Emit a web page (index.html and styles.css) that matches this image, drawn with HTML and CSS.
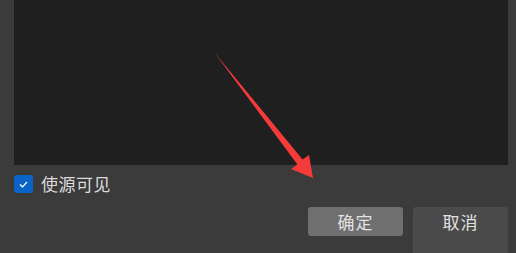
FILE: index.html
```html
<!DOCTYPE html>
<html>
<head>
<meta charset="utf-8">
<link rel="stylesheet" href="styles.css">
</head>
<body>
<div class="dialog">
  <div class="preview"></div>
  <label class="check-row">
    <span class="checkbox">
      <svg width="19" height="18" viewBox="0 0 19 18"><path d="M6 9.5 L8.5 11.8 L13 7" fill="none" stroke="#fff" stroke-width="1.2"/></svg>
    </span>
    <span class="check-label">使源可见</span>
  </label>
  <div class="actions">
    <button class="btn btn-ok">确定</button>
    <button class="btn btn-cancel">取消</button>
  </div>
  <svg class="arrow" width="516" height="253" viewBox="0 0 516 253">
    <polygon points="214,52 302.6,159.6 309,155 313,178 291,169 297.4,164.4" fill="#f53a3a"/>
  </svg>
</div>
</body>
</html>
```
FILE: styles.css
```css
html, body {
  margin: 0;
  padding: 0;
  width: 516px;
  height: 253px;
  overflow: hidden;
  background: #3b3b3b;
  font-family: "Noto Sans CJK SC", "Noto Sans", sans-serif;
}
.dialog {
  position: relative;
  width: 516px;
  height: 253px;
  padding: 0 8px 0 14px;
  box-sizing: border-box;
  display: flex;
  flex-direction: column;
}
.preview {
  height: 165px;
  background: #1f1f1f;
  flex: none;
}
.check-row {
  margin-top: 10px;
  display: flex;
  align-items: center;
  gap: 8px;
  height: 18px;
}
.checkbox {
  width: 19px;
  height: 18px;
  background: #0b63c5;
  border-radius: 3px;
  display: flex;
}
.check-label {
  color: #dcdcdc;
  font-size: 17px;
  line-height: 18px;
  letter-spacing: 0.5px;
}
.actions {
  margin-top: 14px;
  display: flex;
  justify-content: flex-end;
  gap: 10px;
  align-items: flex-start;
}
.btn {
  width: 95px;
  border: none;
  border-radius: 3px;
  font-family: "Noto Sans CJK SC", "Noto Sans", sans-serif;
  font-size: 17px;
  color: #e2e2e2;
  padding: 0;
  letter-spacing: 1px;
}
.btn-ok {
  height: 29px;
  line-height: 29px;
  background: #6f6f6f;
}
.btn-cancel {
  height: 50px;
  line-height: 29px;
  background: #4a4a4a;
  display: flex;
  justify-content: center;
  align-items: flex-start;
}
.arrow {
  position: absolute;
  left: 0;
  top: 0;
  pointer-events: none;
}
```
